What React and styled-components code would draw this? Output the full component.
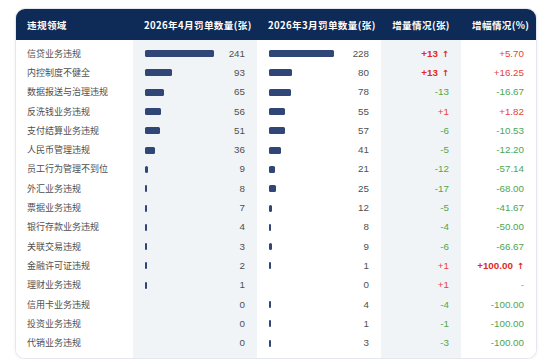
import styled, { createGlobalStyle, css } from "styled-components"

const GlobalStyle = createGlobalStyle`
  body {
    margin: 0;
    background: #fff;
    font-family: "Liberation Sans", "Noto Sans CJK SC", sans-serif;
  }
`

const rows = [
  ["信贷业务违规", 241, 228, "+13", "+5.70", "bigUp", "up"],
  ["内控制度不健全", 93, 80, "+13", "+16.25", "bigUp", "up"],
  ["数据报送与治理违规", 65, 78, "-13", "-16.67", "down", "down"],
  ["反洗钱业务违规", 56, 55, "+1", "+1.82", "up", "up"],
  ["支付结算业务违规", 51, 57, "-6", "-10.53", "down", "down"],
  ["人民币管理违规", 36, 41, "-5", "-12.20", "down", "down"],
  ["员工行为管理不到位", 9, 21, "-12", "-57.14", "down", "down"],
  ["外汇业务违规", 8, 25, "-17", "-68.00", "down", "down"],
  ["票据业务违规", 7, 12, "-5", "-41.67", "down", "down"],
  ["银行存款业务违规", 4, 8, "-4", "-50.00", "down", "down"],
  ["关联交易违规", 3, 9, "-6", "-66.67", "down", "down"],
  ["金融许可证违规", 2, 1, "+1", "+100.00", "up", "bigUp"],
  ["理财业务违规", 1, 0, "+1", "-", "up", "none"],
  ["信用卡业务违规", 0, 4, "-4", "-100.00", "down", "down"],
  ["投资业务违规", 0, 1, "-1", "-100.00", "down", "down"],
  ["代销业务违规", 0, 3, "-3", "-100.00", "down", "down"],
]

const MAX = 241
const BAR_MAX = 69

const Page = styled.div`
  padding: 8px 0 0 15px;
`

const Card = styled.div`
  width: 522px;
  border: 1px solid #e4e8ee;
  border-radius: 10px;
  overflow: hidden;
  background: #fff;
  box-shadow: 0 1px 3px rgba(20, 40, 80, 0.06);
  box-sizing: border-box;
`

const Table = styled.table`
  width: 100%;
  border-collapse: collapse;
  table-layout: fixed;
`

const Head = styled.th`
  height: 31px;
  padding: 0 11px;
  background: #0e2b57;
  color: #fff;
  font-family: "Noto Sans CJK SC", "Liberation Sans", sans-serif;
  font-size: 9.6px;
  letter-spacing: 0.35px;
  font-weight: 700;
  text-align: ${p => (p.$left ? "left" : "center")};
  white-space: nowrap;
`

const Row = styled.tr`
  height: 19.3px;
`

const Spacer = styled.tr`
  height: ${p => p.$h}px;
`

const Cell = styled.td`
  padding: 0 12px 0 11px;
  font-size: 9.5px;
  line-height: 12px;
  color: #555;
  white-space: nowrap;
  background: ${p => (p.$shaded ? "#f1f4f7" : "#fff")};
  text-align: ${p => p.$align || "left"};
`

const Name = styled.span`
  font-family: "Noto Sans CJK SC", "Liberation Sans", sans-serif;
  font-size: 9px;
  color: #4f4f4f;
`

const BarWrap = styled.div`
  display: flex;
  align-items: center;
  justify-content: space-between;
  padding-left: 1px;
`

const Bar = styled.span`
  display: block;
  height: 7px;
  border-radius: 1.5px;
  background: #2f4677;
`

const Num = styled.span`
  font-size: 9.8px;
  color: #4f4f4f;
`

const tones = {
  up: css`color: #e8413a;`,
  bigUp: css`color: #e02a22; font-weight: 700;`,
  down: css`color: #4ea64f;`,
  none: css`color: #999;`,
}

const Change = styled.span`
  font-size: 9.8px;
  ${p => tones[p.$tone]}
`

const Arrow = styled.span`
  margin-left: 4px;
  font-family: "DejaVu Sans", sans-serif;
  font-size: 8.5px;
`

function BarCell({ value, shaded }) {
  const w = value > 0 ? Math.max(2, (value / MAX) * BAR_MAX) : 0
  return (
    <Cell $shaded={shaded}>
      <BarWrap>
        {w > 0 ? <Bar style={{ width: w }} /> : <span />}
        <Num>{value}</Num>
      </BarWrap>
    </Cell>
  )
}

function Delta({ text, tone }) {
  return (
    <Change $tone={tone}>
      {text}
      {tone === "bigUp" && <Arrow>↑</Arrow>}
    </Change>
  )
}

export default function App() {
  return (
    <Page>
      <GlobalStyle />
      <Card>
        <Table>
          <colgroup>
            <col style={{ width: 117 }} />
            <col style={{ width: 124 }} />
            <col style={{ width: 124 }} />
            <col style={{ width: 80 }} />
            <col />
          </colgroup>
          <thead>
            <tr>
              <Head $left>违规领域</Head>
              <Head>2026年4月罚单数量(张)</Head>
              <Head>2026年3月罚单数量(张)</Head>
              <Head>增量情况(张)</Head>
              <Head>增幅情况(%)</Head>
            </tr>
          </thead>
          <tbody>
            <Spacer $h={4}>
              <Cell />
              <Cell $shaded />
              <Cell />
              <Cell $shaded />
              <Cell />
            </Spacer>
            {rows.map(([name, apr, mar, inc, pct, incTone, pctTone]) => (
              <Row key={name}>
                <Cell>
                  <Name>{name}</Name>
                </Cell>
                <BarCell value={apr} shaded />
                <BarCell value={mar} />
                <Cell $shaded $align="right">
                  <Delta text={inc} tone={incTone} />
                </Cell>
                <Cell $align="right">
                  <Delta text={pct} tone={pctTone} />
                </Cell>
              </Row>
            ))}
            <Spacer $h={5}>
              <Cell />
              <Cell $shaded />
              <Cell />
              <Cell $shaded />
              <Cell />
            </Spacer>
          </tbody>
        </Table>
      </Card>
    </Page>
  )
}
